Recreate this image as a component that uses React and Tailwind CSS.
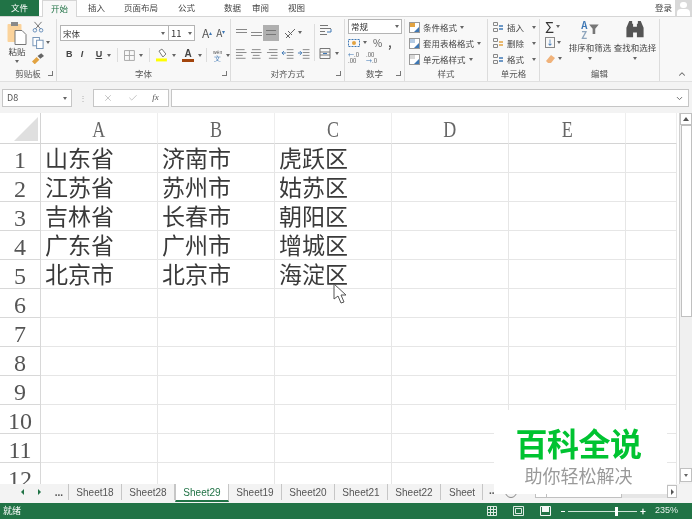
import { Check, ChevronDown, ChevronUp, X } from "lucide-react";

const sheetFont = { fontFamily: '"Liberation Serif", "Noto Sans CJK SC", serif' };
const rows = [
  ["山东省", "济南市", "虎跃区"],
  ["江苏省", "苏州市", "姑苏区"],
  ["吉林省", "长春市", "朝阳区"],
  ["广东省", "广州市", "增城区"],
  ["北京市", "北京市", "海淀区"],
];
const tabs = ["Sheet18", "Sheet28", "Sheet29", "Sheet19", "Sheet20", "Sheet21", "Sheet22"];

function Caret({ className = "" }) {
  return <span className={`inline-block h-0 w-0 shrink-0 border-x-[2.5px] border-t-[3px] border-x-transparent border-t-[#666] ${className}`} />;
}

function Lines({ aligns, middle }) {
  return (
    <svg width="15" height="14" viewBox="0 0 15 14" stroke="#888" strokeWidth="1">
      {aligns.map((a, i) => (
        <path key={i} d={`M${a[0]} ${3.5 + i * 3}H${a[1]}`} />
      ))}
      {middle}
    </svg>
  );
}

function Group({ width, label, launcher, children }) {
  return (
    <div className="relative flex h-full shrink-0 flex-col border-r border-[#dcdcdc]" style={{ width }}>
      <div className="h-[45px] shrink-0">{children}</div>
      <div className="mt-[2px] text-center text-[8.5px] leading-[14px] text-[#555]">{label}</div>
      {launcher && <span className="absolute bottom-[5px] right-[3px] h-[5px] w-[5px] border-b border-r border-[#777]" />}
    </div>
  );
}

function StyleRow({ color, label }) {
  return (
    <div className="flex h-[16px] items-center gap-[3px] whitespace-nowrap text-[8.5px] text-[#444]">
      <svg width="11" height="11" viewBox="0 0 11 11">
        <rect x="0.5" y="0.5" width="10" height="10" fill="#fff" stroke="#999" />
        <path d="M1 1h5v4H1z" fill={color} />
        <path d="M5 10l5-5v5z" fill="#3f78b5" />
      </svg>
      {label}
      <Caret />
    </div>
  );
}

function CellRow({ color, label }) {
  return (
    <div className="flex h-[16px] items-center gap-[3px] whitespace-nowrap text-[8.5px] text-[#444]">
      <svg width="12" height="12" viewBox="0 0 12 12" fill="none" stroke="#888">
        <path d="M1.5 1.5h4v3h-4zM1.5 7.5h4v3h-4z" />
        <path d="M7 5h4M7 8h4" stroke={color} strokeWidth="1.5" />
      </svg>
      {label}
      <Caret className="ml-[5px]" />
    </div>
  );
}

function Ribbon() {
  return (
    <div className="flex h-[64px] bg-[#f8f8f8] pt-[2px]">
      <Group width={57} label="剪贴板" launcher>
        <div className="flex h-full pl-[7px] pt-[2px]">
          <div className="flex w-[20px] flex-col items-center">
            <svg width="20" height="24" viewBox="0 0 20 24">
              <rect x="0.5" y="3" width="14" height="18" rx="1" fill="#fbd39b" />
              <rect x="4" y="1" width="7" height="4" fill="#8a8a8a" />
              <path d="M8 9.5h7l4 4v10H8z" fill="#fff" stroke="#777" />
            </svg>
            <span className="whitespace-nowrap text-[8.5px] leading-[13px] text-[#444]">粘贴</span>
            <Caret className="mt-[2px]" />
          </div>
          <div className="ml-[5px] flex flex-col gap-[4px]">
            <svg width="12" height="12" viewBox="0 0 12 13" fill="none" stroke="#5b86b5"><path d="M2 1l7 8M10 1L3 9" stroke="#666" /><circle cx="2.5" cy="10.5" r="2" /><circle cx="9.5" cy="10.5" r="2" /></svg>
            <span className="flex items-center gap-[2px]">
              <svg width="12" height="12" viewBox="0 0 12 13" fill="#fff" stroke="#6f8fb3"><rect x="0.5" y="0.5" width="7" height="9" /><rect x="4.5" y="3.5" width="7" height="9" /></svg>
              <Caret />
            </span>
            <svg width="12" height="12" viewBox="0 0 13 12"><path d="M0 9l5-5 3 3-5 5z" fill="#e2a341" /><path d="M6 3l4-3 3 3-4 3z" fill="#666" /></svg>
          </div>
        </div>
      </Group>

      <Group width={174} label="字体" launcher>
        <div className="flex flex-col pl-[3px] pt-[6px]">
          <div className="flex items-center">
            <div className="flex h-[16px] w-[109px] items-center justify-between border border-[#b4b4b4] bg-white px-[2px] text-[8.5px] text-[#333]">
              宋体<Caret className="mr-[1px]" />
            </div>
            <div className="-ml-px flex h-[16px] w-[27px] items-center justify-between border border-[#b4b4b4] bg-white px-[2px] text-[9.5px] text-[#333]">
              11<Caret />
            </div>
            <span className="ml-[7px] text-[12px] leading-none text-[#555]">A<sup className="text-[6px] text-[#3f78b5]">▴</sup></span>
            <span className="ml-[4px] text-[10px] leading-none text-[#555]">A<sup className="text-[6px] text-[#3f78b5]">▾</sup></span>
          </div>
          <div className="mt-[6px] flex h-[16px] items-center pl-[6px] text-[9px] text-[#444]" style={{ fontFamily: '"Liberation Sans", sans-serif' }}>
            <b className="w-[15px]">B</b>
            <i className="w-[15px] font-bold">I</i>
            <u className="w-[12px] font-bold">U</u>
            <Caret />
            <span className="mx-[6px] h-[14px] w-px bg-[#ddd]" />
            <svg width="11" height="11" viewBox="0 0 11 11" fill="none" stroke="#aaa"><path d="M.5.5h10v10H.5zM5.5.5v10M.5 5.5h10" /></svg>
            <Caret className="ml-[4px]" />
            <span className="mx-[6px] h-[14px] w-px bg-[#ddd]" />
            <svg width="12" height="14" viewBox="0 0 12 14"><path d="M3 3l3-2 4 5-3 3z" fill="#fff" stroke="#777" /><rect y="10.5" width="11" height="3" fill="#ffff00" /></svg>
            <Caret className="ml-[4px]" />
            <span className="ml-[6px] flex h-[14px] w-[12px] flex-col items-center text-[10px] font-bold leading-[11px] text-[#444]">
              A<span className="block h-[3px] w-[12px] bg-[#a3450d]" />
            </span>
            <Caret className="ml-[4px]" />
            <span className="mx-[4px] h-[14px] w-px bg-[#ddd]" />
            <span className="flex w-[13px] flex-col items-center text-[5px] leading-[6px] text-[#555]">wén<span className="text-[7px] leading-[7px] text-[#3f78b5]">文</span></span>
            <Caret className="ml-[2px]" />
          </div>
        </div>
      </Group>

      <Group width={114} label="对齐方式" launcher>
        <div className="flex pl-[4px] pt-[5px]">
          <div className="flex w-[76px] flex-col">
            <div className="flex h-[17px] items-center">
              <Lines aligns={[[1, 12], [1, 12], []]} />
              <Lines aligns={[[], [1, 12], [1, 12]]} />
              <span className="-ml-[2px] flex h-[16px] w-[16px] items-center justify-center bg-[#b0b0b0]">
                <span className="h-[5px] w-[10px] border-y border-[#777]" />
              </span>
              <svg className="ml-[5px]" width="12" height="12" viewBox="0 0 12 12" fill="none" stroke="#666"><path d="M2 11L11 2M4 4l4 4M1 6l5 5" /></svg>
              <Caret className="ml-[2px]" />
            </div>
            <div className="mt-[4px] flex h-[16px] items-center gap-[1px]">
              <Lines aligns={[[1, 10], [1, 12], [1, 8], [1, 11]]} />
              <Lines aligns={[[2, 11], [1, 12], [3, 10], [2, 11]]} />
              <Lines aligns={[[3, 12], [1, 12], [5, 12], [3, 12]]} />
              <Lines aligns={[[6, 13], [6, 13], [6, 13], [6, 13]]} middle={<path d="M5 7H1M3 5L1 7l2 2" stroke="#3f78b5" fill="none" />} />
              <Lines aligns={[[6, 13], [6, 13], [6, 13], [6, 13]]} middle={<path d="M1 7h4M3 5l2 2-2 2" stroke="#3f78b5" fill="none" />} />
            </div>
          </div>
          <div className="ml-[3px] flex flex-col border-l border-[#ddd] pl-[4px]">
            <svg width="13" height="13" viewBox="0 0 13 13" fill="none" stroke="#777"><path d="M1 1.5h8M1 4.5h11M1 7.5h5M1 10.5h7" /><path d="M12 5v3H8" stroke="#3f78b5" /></svg>
            <span className="mt-[10px] flex items-center gap-[3px]">
              <svg width="13" height="13" viewBox="0 0 13 13" fill="none" stroke="#777"><path d="M1 1.5h10v10H1zM1 5h10M1 8h10" /><path d="M4 6.5h4" stroke="#3f78b5" /></svg>
              <Caret />
            </span>
          </div>
        </div>
      </Group>

      <Group width={60} label="数字" launcher>
        <div className="flex flex-col px-[3px]">
          <div className="flex h-[15px] w-[54px] items-center justify-between border border-[#b4b4b4] bg-white px-[2px] text-[8.5px] text-[#333]">
            常规<Caret />
          </div>
          <div className="flex h-[17px] items-center text-[10px] text-[#555]">
            <svg width="12" height="12" viewBox="0 0 12 12" fill="none" stroke="#3f78b5"><path d="M.5 2.5h11v7H.5z" strokeDasharray="2 1" /><circle cx="6" cy="6" r="2" fill="#e2a341" stroke="none" /></svg>
            <Caret className="ml-[3px]" />
            <span className="ml-[6px]">%</span>
            <b className="ml-[6px]">,</b>
          </div>
          <div className="flex h-[14px] items-center gap-[3px] text-[6px] leading-[6px] text-[#555]">
            <span className="w-[12px]"><span className="text-[#3f78b5]">←</span>.0<br />.00</span>
            <span className="ml-[3px] w-[12px]">.00<br /><span className="text-[#3f78b5]">→</span>.0</span>
          </div>
        </div>
      </Group>

      <Group width={83} label="样式">
        <div className="flex flex-col pl-[4px]">
          <StyleRow color="#e2a341" label="条件格式" />
          <StyleRow color="#b5cbe3" label="套用表格格式" />
          <StyleRow color="#d8d8d8" label="单元格样式" />
        </div>
      </Group>

      <Group width={52} label="单元格">
        <div className="flex flex-col pl-[4px]">
          <CellRow color="#3f78b5" label="插入" />
          <CellRow color="#e2a341" label="删除" />
          <CellRow color="#3f78b5" label="格式" />
        </div>
      </Group>

      <Group width={120} label="编辑">
        <div className="flex pl-[5px] pt-[1px]">
          <div className="flex w-[23px] flex-col gap-[3px]">
            <span className="flex h-[13px] items-center gap-[2px] text-[15px] leading-none text-[#333]">Σ<Caret /></span>
            <span className="flex h-[13px] items-center gap-[2px]">
              <span className="flex h-[11px] w-[10px] items-center justify-center border border-[#888] text-[7px] font-bold leading-none text-[#3f78b5]">↓</span>
              <Caret />
            </span>
            <span className="flex h-[13px] items-center gap-[2px]">
              <svg width="11" height="10" viewBox="0 0 11 10"><path d="M1 7l5-6 4 3-4 5H3z" fill="#f0b27a" /></svg>
              <Caret />
            </span>
          </div>
          <div className="flex w-[44px] flex-col items-center">
            <svg width="22" height="21" viewBox="0 0 22 24">
              <text x="1" y="10" fontSize="11" fontWeight="700" fill="#3f78b5">A</text>
              <text x="1" y="22" fontSize="11" fontWeight="700" fill="#8fa6bd">Z</text>
              <path d="M10 5h11l-4 5v6h-3v-6z" fill="#777" />
            </svg>
            <span className="whitespace-nowrap text-[8.5px] leading-[13px] text-[#444]">排序和筛选</span>
            <Caret className="mt-[3px]" />
          </div>
          <div className="ml-[1px] flex w-[44px] flex-col items-center">
            <svg width="20" height="21" viewBox="0 0 20 22" fill="#555">
              <path d="M4 1h3v3h1v14H1V8zM13 1h3l3 7v10h-7V4h1zM8 7h4v6H8z" />
            </svg>
            <span className="whitespace-nowrap text-[8.5px] leading-[13px] text-[#444]">查找和选择</span>
            <Caret className="mt-[3px]" />
          </div>
        </div>
      </Group>

      <div className="flex flex-1 items-end justify-end pb-[2px] pr-[5px]">
        <ChevronUp size={10} strokeWidth={2.5} className="text-[#666]" />
      </div>
    </div>
  );
}

function FormulaBar() {
  return (
    <div className="flex h-[26px] items-start gap-[2px] bg-[#f3f3f3] pl-[2px] pr-[3px] pt-[2px]">
      <div className="flex h-[18px] w-[70px] items-center justify-between border border-[#c6c6c6] bg-white px-[4px] text-[9px] text-[#555]">
        D8<Caret />
      </div>
      <div className="flex h-[18px] w-[17px] items-center justify-center text-[8px] leading-none text-[#aaa]">⋮</div>
      <div className="flex h-[18px] w-[76px] items-center justify-around border border-[#c6c6c6] bg-white px-[2px]">
        <X size={10} className="text-[#bbb]" />
        <Check size={10} className="text-[#bbb]" />
        <span className="text-[9px] italic text-[#555]" style={sheetFont}>fx</span>
      </div>
      <div className="flex h-[18px] flex-1 items-center justify-end border border-[#c6c6c6] bg-white pr-[4px]">
        <ChevronDown size={9} strokeWidth={2.5} className="text-[#666]" />
      </div>
    </div>
  );
}

function Sheet() {
  const total = 12;
  return (
    <div className="relative flex h-[371px] overflow-hidden bg-white" style={sheetFont}>
      <div className="grid h-[400px] w-[677px] shrink-0 grid-cols-[41px_repeat(5,117px)_51px] grid-rows-[31px_repeat(13,29px)] content-start">
        <div className="relative border-b border-r border-[#d4d4d4] bg-white">
          <span className="absolute bottom-[2px] right-[2px] h-0 w-0 border-b-[24px] border-l-[24px] border-b-[#dfdfdf] border-l-transparent" />
        </div>
        {["A", "B", "C", "D", "E", ""].map((c, i) => (
          <div key={i} className="border-b border-r border-[#d4d4d4] border-r-[#eeeeee] pt-[2px] text-center text-[24px] leading-[28px] text-[#666]">
            <span className="inline-block scale-x-[0.75]">{c}</span>
          </div>
        ))}
        {Array.from({ length: total }, (_, r) => (
          <div key={r} className="contents">
            <div className="overflow-hidden border-b border-r border-[#d8d8d8] bg-white text-center text-[24px] leading-[33px] text-[#555]">
              {r + 1}
            </div>
            {[0, 1, 2, 3, 4, 5].map((c) => (
              <div key={c} className="overflow-hidden whitespace-nowrap border-b border-r border-[#e6e6e6] pl-[4px] text-[23px] leading-[32px] text-[#3a3a3a]">
                {rows[r]?.[c] ?? ""}
              </div>
            ))}
          </div>
        ))}
      </div>
      <div className="ml-[2px] flex w-[13px] flex-col items-center border-l border-[#d0d0d0] bg-[#f0f0f0] pb-[2px]">
        <div className="flex h-[12px] w-full items-center justify-center border border-[#c0c0c0] bg-white">
          <span className="h-0 w-0 border-x-[3.5px] border-b-[4px] border-x-transparent border-b-[#555]" />
        </div>
        <div className="h-[192px] w-[11px] border border-[#c0c0c0] bg-white" />
        <div className="mt-auto flex h-[14px] w-full items-center justify-center border border-[#c0c0c0] bg-white">
          <Caret />
        </div>
      </div>
      {/* cursor */}
      <svg className="absolute left-[333px] top-[170px]" width="15" height="22" viewBox="0 0 15 22">
        <path d="M1 1v15l4-3 3 7 3-1-3-7h5z" fill="#fff" stroke="#555" />
      </svg>
    </div>
  );
}

function TabBar() {
  return (
    <div className="flex h-[19px] items-start bg-[#f3f3f3] text-[10px] text-[#555]" style={{ fontFamily: '"Liberation Sans", "Noto Sans CJK SC", sans-serif' }}>
      <div className="flex h-[16px] w-[69px] shrink-0 items-center justify-end gap-[14px] border-r border-[#c6c6c6] pr-[5px]">
        <span className="h-0 w-0 border-y-[3px] border-r-[3px] border-y-transparent border-r-[#217346]" />
        <span className="h-0 w-0 border-y-[3px] border-l-[3px] border-y-transparent border-l-[#217346]" />
        <span className="font-bold text-[#555]">...</span>
      </div>
      {tabs.map((t) => (
        <div
          key={t}
          className={
            t === "Sheet29"
              ? "-mt-px h-[19px] w-[54px] shrink-0 border-x border-b-2 border-x-[#c6c6c6] border-b-[#217346] bg-white pt-px text-center leading-[17px] text-[#217346]"
              : "h-[16px] w-[53px] shrink-0 border-r border-[#c6c6c6] text-center leading-[17px]"
          }
        >
          {t}
        </div>
      ))}
      <div className="h-[16px] w-[42px] shrink-0 border-r border-[#c6c6c6] pl-[8px] leading-[17px]">Sheet</div>
      <span className="pl-[6px] font-bold leading-[14px]">...</span>
      <span className="ml-[8px] mt-[2px] flex h-[12px] w-[12px] items-center justify-center rounded-full border border-[#888] text-[9px] leading-none">+</span>
      <span className="ml-[18px] mt-[1px] h-[13px] w-[12px] border border-[#c0c0c0] bg-white" />
      <span className="mt-[1px] h-[13px] w-[75px] border-y border-r border-[#c0c0c0] bg-white" />
      <span className="mt-[3px] h-[11px] flex-1 bg-[#e6e6e6]" />
      <span className="mr-[15px] mt-[1px] flex h-[13px] w-[10px] items-center justify-center border border-[#c0c0c0] bg-white">
        <span className="h-0 w-0 border-y-[3px] border-l-[3px] border-y-transparent border-l-[#555]" />
      </span>
    </div>
  );
}

export default function App() {
  return (
    <div className="relative flex h-[519px] w-[692px] flex-col overflow-hidden bg-white blur-[0.35px]" style={{ fontFamily: '"Noto Sans CJK SC", sans-serif' }}>
      <div className="flex h-[17px] items-stretch border-b border-[#d6d6d6] bg-white text-[8.5px] leading-[15px] text-[#444]">
        <div className="w-[39px] bg-[#217346] text-center text-white">文件</div>
        <div className="z-10 ml-[3px] h-[17px] w-[35px] border-x border-t border-[#d6d6d6] bg-[#f8f8f8] text-center text-[#217346]">开始</div>
        <div className="w-[47px] pl-[11px]">插入</div>
        <div className="w-[54px]">页面布局</div>
        <div className="w-[46px]">公式</div>
        <div className="w-[28px]">数据</div>
        <div className="w-[36px]">审阅</div>
        <div>视图</div>
        <div className="ml-auto pr-[3px]">登录</div>
        <div className="flex w-[17px] flex-col items-center overflow-hidden bg-[#d9d9d9]">
          <span className="mt-[2px] h-[7px] w-[7px] rounded-full bg-white" />
          <span className="mt-[1px] h-[8px] w-[13px] rounded-t-[4px] bg-white" />
        </div>
      </div>
      <Ribbon />
      <div className="h-[6px] border-t border-[#e0e0e0] bg-[#f3f3f3]" />
      <FormulaBar />
      <Sheet />
      <TabBar />
      <div className="flex h-[16px] items-center bg-[#217346] pl-[3px] pr-[14px] text-[9px] text-white">
        <span>就绪</span>
        <div className="ml-auto flex items-center">
          <svg width="10" height="10" viewBox="0 0 10 10" fill="none" stroke="#fff" opacity="0.85"><path d="M.5.5h9v9h-9zM.5 3.5h9M.5 6.5h9M3.5.5v9M6.5.5v9" /></svg>
          <svg className="ml-[16px]" width="11" height="10" viewBox="0 0 11 10" fill="none" stroke="#fff" opacity="0.85"><path d="M.5.5h10v9H.5zM2.5 2.5h6v5h-6z" /></svg>
          <svg className="ml-[16px]" width="11" height="10" viewBox="0 0 11 10" opacity="0.95"><path d="M.5.5h10v9H.5z" fill="none" stroke="#fff" /><path d="M2 1h7v5H2z" fill="#fff" /></svg>
          <span className="ml-[10px] h-px w-[4px] bg-white" />
          <span className="relative ml-[3px] h-px w-[69px] bg-[#cfe3d8]">
            <span className="absolute left-[47px] top-[-4px] h-[9px] w-[3px] bg-white" />
          </span>
          <span className="ml-[3px] text-[10px] font-bold leading-none">+</span>
          <span className="ml-[9px] text-[9px] text-[#e6f0ea]" style={{ fontFamily: '"Liberation Sans", sans-serif' }}>235%</span>
        </div>
      </div>
      {/* watermark */}
      <div className="absolute left-[494px] top-[410px] flex h-[84px] w-[173px] flex-col items-center bg-white pr-[4px] pt-[13px]">
        <span className="text-[32px] font-bold leading-[38px] tracking-[-0.5px] text-[#00c331]">百科全说</span>
        <span className="mt-[2px] text-[18px] leading-[24px] text-[#9a9a9a]">助你轻松解决</span>
      </div>
    </div>
  );
}
